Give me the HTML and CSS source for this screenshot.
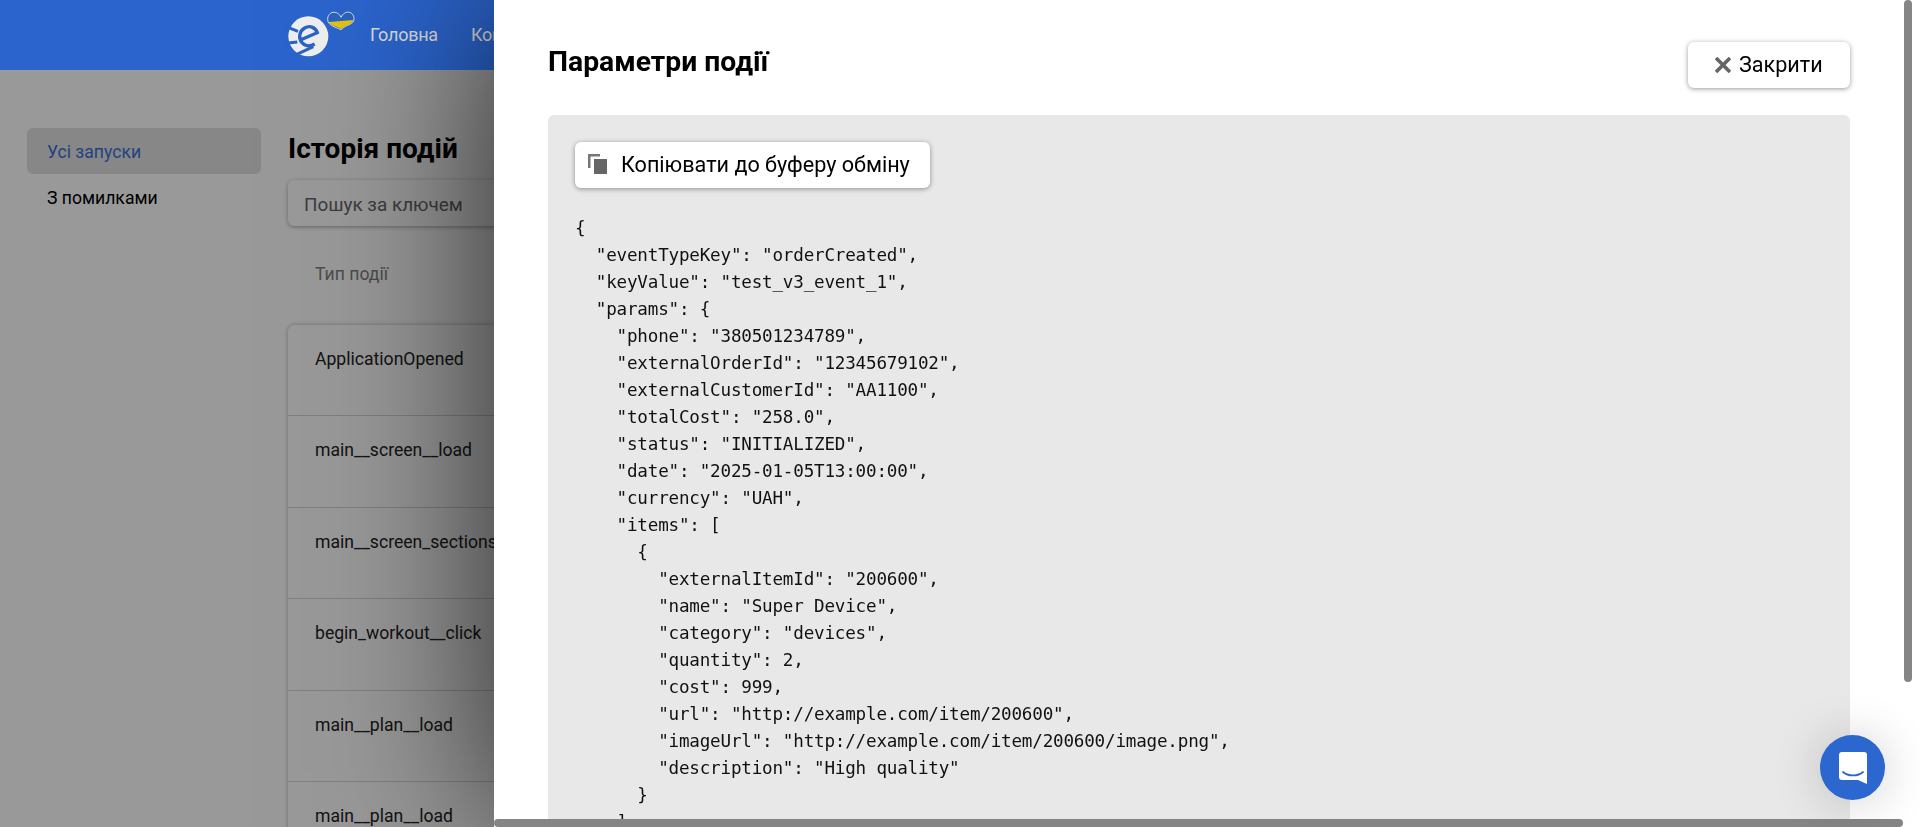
FILE: index.html
```html
<!DOCTYPE html>
<html lang="uk">
<head>
<meta charset="utf-8">
<title>Параметри події</title>
<link rel="stylesheet" href="styles.css">
</head>
<body>
<div class="page">
  <header class="topbar">
    <svg class="logo" viewBox="0 0 228 168" width="76" height="56" aria-hidden="true">
      <circle cx="85" cy="91" r="60" fill="#eeeeee"/>
      <path d="M18 62L54 76M18 112L52 108M36 152L100 122" stroke="#2a62c6" stroke-width="9" fill="none"/>
      <path d="M66 100L112 80C106 62 88 58 74 66C58 75 54 96 66 110C76 121 90 122 104 114" stroke="#2a62c6" stroke-width="10" fill="none"/>
      <path d="M183 34C172 10 143 16 143 40C143 58 164 62 183 71C202 52 222 58 222 38C222 16 194 10 183 34Z" fill="#2a62c2" stroke="#dddddd" stroke-width="3"/>
      <path d="M146 48L220 42C214 58 194 58 183 69C172 60 152 60 146 48Z" fill="#e3c20f"/>
    </svg>
    <nav class="nav"><a class="nav-link">Головна</a><a class="nav-link">Контакти</a></nav>
  </header>
  <div class="content">
    <aside class="side">
      <div class="side-item side-active">Усі запуски</div>
      <div class="side-item">З помилками</div>
    </aside>
    <main class="main">
      <h1 class="main-title">Історія подій</h1>
      <div class="search">Пошук за ключем</div>
      <div class="table-head">Тип події</div>
      <div class="table">
        <div class="row">ApplicationOpened</div>
        <div class="row">main__screen__load</div>
        <div class="row">main__screen_sections__load</div>
        <div class="row">begin_workout__click</div>
        <div class="row">main__plan__load</div>
        <div class="row">main__plan__load</div>
      </div>
    </main>
  </div>
</div>
<div class="overlay"></div>
<section class="drawer">
  <div class="drawer-head">
    <h2 class="drawer-title">Параметри події</h2>
    <button class="btn btn-close">
      <svg class="icon-close" viewBox="0 0 16 16" width="16" height="16" aria-hidden="true"><path d="M1 1l14 14M15 1L1 15" stroke="#666" stroke-width="3.600" fill="none"/></svg>
      <span class="btn-label">Закрити</span>
    </button>
  </div>
  <div class="panel">
    <button class="btn btn-copy">
      <svg class="icon-copy" viewBox="0 0 19 20" width="19" height="20" aria-hidden="true"><path d="M0 0h12v2.500H2.500V14H0z" fill="#777"/><path d="M6 5h13v15H6z" fill="#666"/></svg>
      <span class="btn-label">Копіювати до буферу обміну</span>
    </button>
<pre class="code">{
  "eventTypeKey": "orderCreated",
  "keyValue": "test_v3_event_1",
  "params": {
    "phone": "380501234789",
    "externalOrderId": "12345679102",
    "externalCustomerId": "AA1100",
    "totalCost": "258.0",
    "status": "INITIALIZED",
    "date": "2025-01-05T13:00:00",
    "currency": "UAH",
    "items": [
      {
        "externalItemId": "200600",
        "name": "Super Device",
        "category": "devices",
        "quantity": 2,
        "cost": 999,
        "url": "http://example.com/item/200600",
        "imageUrl": "http://example.com/item/200600/image.png",
        "description": "High quality"
      }
    ]
  }
}</pre>
  </div>
</section>
<div class="scroll-v"></div>
<div class="scroll-h"></div>
<button class="chat" aria-label="Чат">
  <svg viewBox="0 0 28 32" width="28" height="32" aria-hidden="true"><path d="M3 0h22a3 3 0 0 1 3 3v29l-9-4H3a3 3 0 0 1-3-3V3a3 3 0 0 1 3-3z" fill="#fff"/><path d="M4 20c5 4.500 15 4.500 20 0" fill="none" stroke="#2b67cf" stroke-width="1.800" stroke-linecap="round"/></svg>
</button>
</body>
</html>
```
FILE: styles.css
```css
* { box-sizing: border-box; }
html, body { margin: 0; height: 100%; overflow: hidden; }
body { font-family: Roboto, "Noto Sans", sans-serif; background: #fff; color: #000; }

.page { height: 827px; overflow: hidden; display: flex; flex-direction: column; }
.topbar { height: 70px; flex: none; background: #2b64cc; display: flex; align-items: center; padding-left: 288px; position: relative; z-index: 2; }
.logo { position: absolute; left: 280px; top: 6px; }
.nav { display: flex; gap: 33px; margin: -2px 0 0 82px; }
.nav-link { color: #dcdcdc; font-size: 18px; white-space: nowrap; letter-spacing: -0.25px; }

.content { display: flex; flex: 1; min-height: 0; padding-top: 58px; padding-left: 27px; }
.side { width: 234px; flex: none; margin-right: 27px; }
.side-item { height: 46px; line-height: 48px; padding-left: 20px; font-size: 17.6px; border-radius: 6px; }
.side-active { background: #e1e1e1; color: #3a6fd8; }
.main { flex: 1; min-width: 0; }
.main-title { font-size: 28px; font-weight: 700; margin: 3px 0 0; line-height: 36px; }
.search { margin-top: 13px; height: 46px; line-height: 50px; width: 900px; padding-left: 16px; font-size: 18.9px; color: #666; border-radius: 6px; box-shadow: 0 1px 4px rgba(0,0,0,.35); background: #fff; }
.table-head { padding: 35px 27px 0; height: 99px; font-size: 17.6px; line-height: 26px; color: #808080; }
.table { border-radius: 6px 0 0 0; box-shadow: 0 0 4px rgba(0,0,0,.3); width: 900px; }
.row { height: 91.4px; padding: 21px 27px 0; font-size: 17.6px; line-height: 26px; color: #222; border-bottom: 1px solid #d4d4d4; white-space: nowrap; }

.overlay { position: fixed; inset: 0; background: rgba(0,0,0,.4); z-index: 1; }
.drawer { position: fixed; top: 0; bottom: 0; left: 494px; right: 0; background: #fff; padding: 42px 70px 0 54px; box-shadow: 0 0 160px rgba(0,0,0,.75); overflow: hidden; z-index: 3; }
.drawer-head { display: flex; justify-content: space-between; align-items: flex-start; height: 73px; }
.drawer-title { margin: 0; font-size: 28.3px; font-weight: 700; line-height: 40px; }
.btn { display: inline-flex; align-items: center; height: 46px; background: #fff; border: 0; border-radius: 6px; font-family: inherit; font-size: 21.6px; color: #000; box-shadow: 0 1px 5px rgba(0,0,0,.4); }
.btn-label { margin-top: -2px; }
.btn-close { width: 162px; padding-left: 27px; }
.icon-close { margin-right: 8px; }
.panel { background: #e8e8e8; border-radius: 6px; padding: 27px 27px 0; height: 900px; }
.btn-copy { width: 355px; padding-left: 13px; }
.icon-copy { margin: -2px 14px 0 0; }
.code { margin: 27px 0 0; font-family: "DejaVu Sans Mono", monospace; font-size: 17.6px; letter-spacing: -0.2px; line-height: 27px; color: #111; }

.scroll-v { position: fixed; left: 1904px; top: 0; width: 8px; height: 682px; background: #858585; border-radius: 4px; z-index: 4; }
.scroll-h { position: fixed; left: 494px; top: 819px; width: 1409px; height: 8px; background: #858585; border-radius: 4px; z-index: 4; }
.chat { position: fixed; left: 1820px; top: 735px; width: 65px; height: 65px; border-radius: 50%; border: 0; padding: 0; background: #2b67cf; display: flex; align-items: center; justify-content: center; box-shadow: 0 2px 50px rgba(0,0,0,.2); z-index: 5; }
```
